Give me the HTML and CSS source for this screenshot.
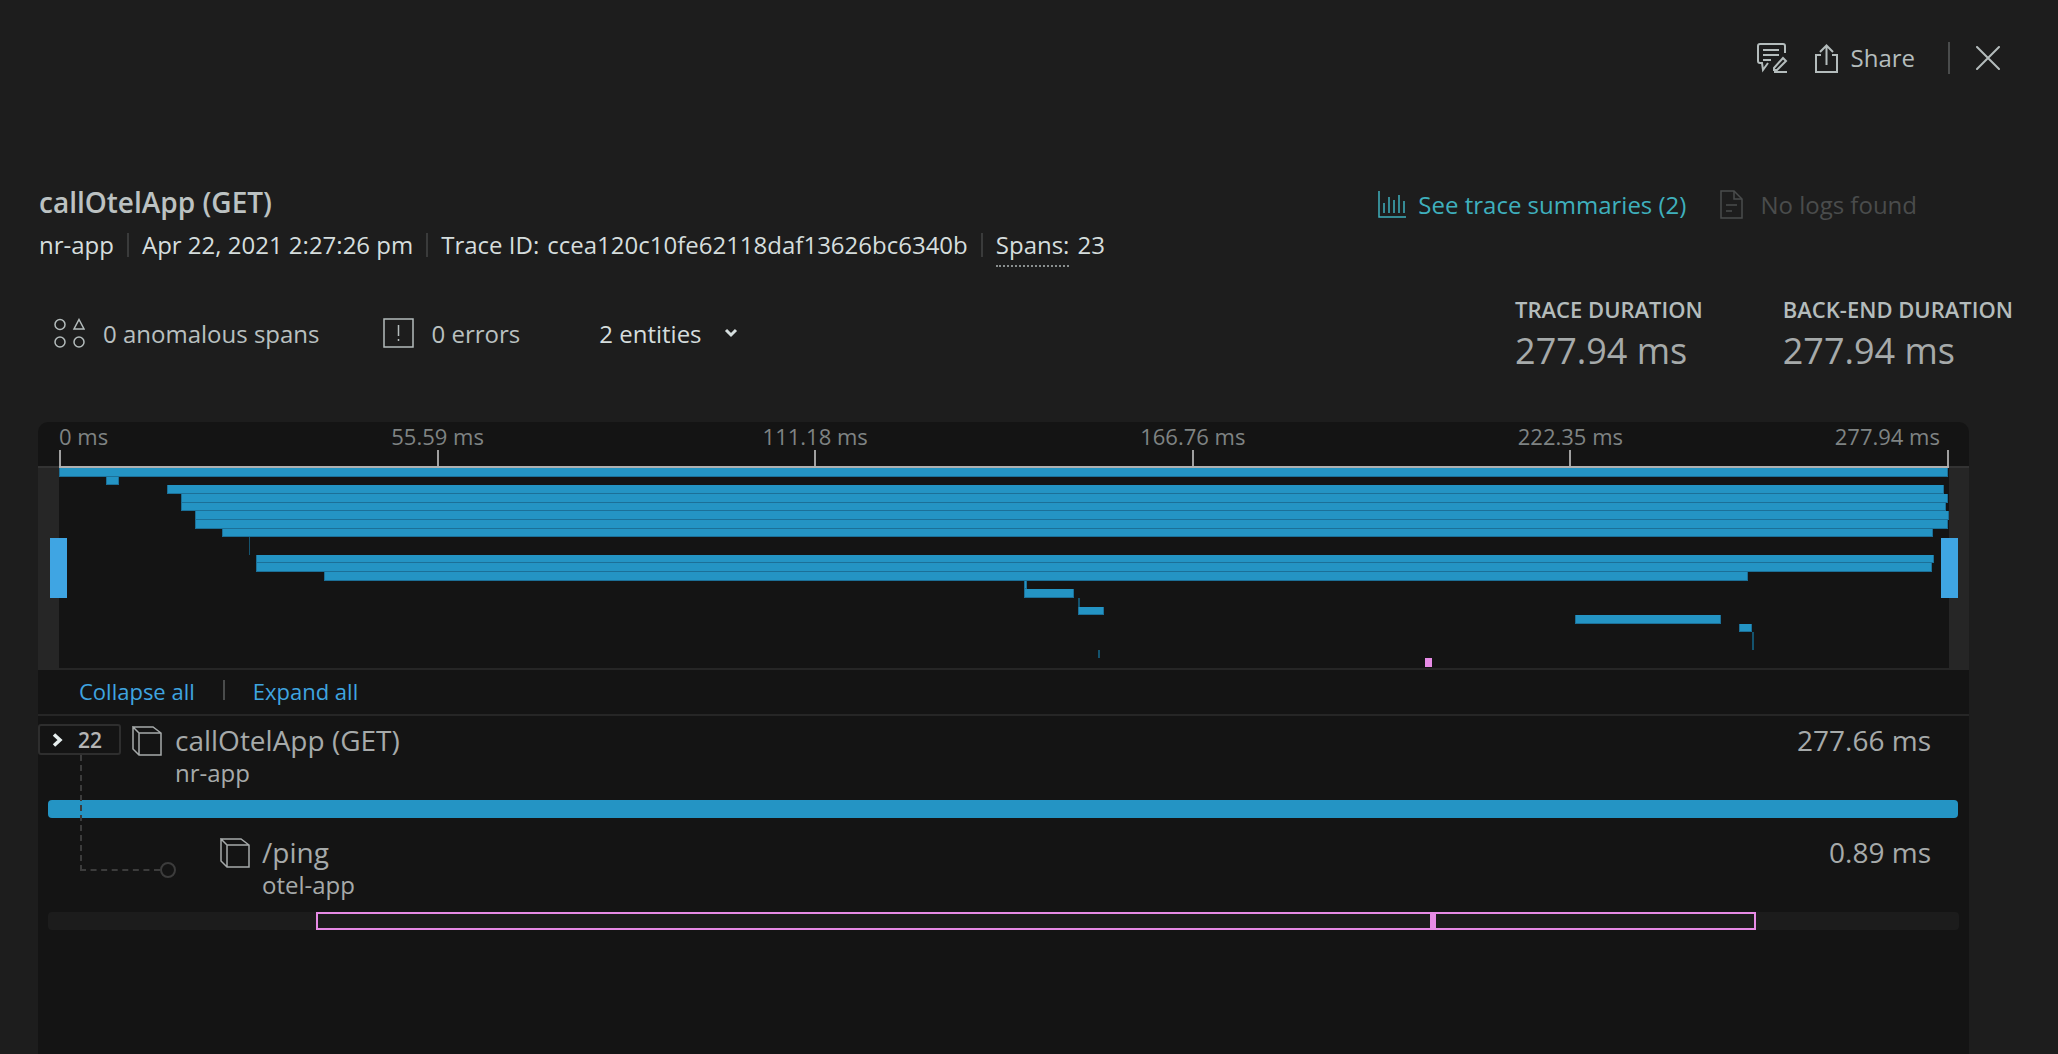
FILE: index.html
```html
<!DOCTYPE html>
<html lang="en">
<head>
    <meta charset="UTF-8">
    <title>callOtelApp (GET) - Trace</title>
    <link rel="stylesheet" href="styles.css">
</head>
<body>
    <header class="topbar">
        <svg class="icon-feedback" width="31" height="30" viewBox="0 0 31 30" fill="none" stroke="#b4bcbc" stroke-width="2">
            <path d="M11 20L6 27 5 20H3a2 2 0 0 1-2-2V3a2 2 0 0 1 2-2H26a2 2 0 0 1 2 2V10"/>
            <path d="M6 7H22M6 12H22M6 17H14"/>
            <path d="M17 25l9-10 3 3-9 9h-3z"/>
            <path d="M17 29H30"/>
        </svg>
        <svg class="icon-share" width="23" height="29" viewBox="0 0 23 29" fill="none" stroke="#b4bcbc" stroke-width="2">
            <path d="M6 11H1V28H22V11H17"/>
            <path d="M11.500 21V2M5 8l6.500-6.500L18 8"/>
        </svg>
        <span class="share-label">Share</span>
        <span class="topbar-sep"></span>
        <svg width="24" height="24" viewBox="0 0 24 24" fill="none" stroke="#b4bcbc" stroke-width="2" stroke-linecap="round">
            <path d="M1 1L23 23M23 1L1 23"/>
        </svg>
    </header>

    <section class="summary">
        <div class="summary-left">
            <h1 class="trace-title">callOtelApp (GET)</h1>
            <div class="trace-meta">
                <span>nr-app</span>
                <span class="meta-sep"></span>
                <span>Apr 22, 2021 2:27:26 pm</span>
                <span class="meta-sep"></span>
                <span>Trace ID:<span class="meta-value">ccea120c10fe62118daf13626bc6340b</span></span>
                <span class="meta-sep"></span>
                <span><span class="dotted">Spans:</span><span class="meta-value">23</span></span>
            </div>
            <div class="stats">
                <div class="stat stat-anomalous">
                    <svg width="31" height="30" viewBox="0 0 31 30" fill="none" stroke="#b4bcbc" stroke-width="1.500">
                        <circle cx="6" cy="6.500" r="5"/>
                        <path d="M25 1.500l5 9.500H20z"/>
                        <circle cx="6" cy="24" r="5"/>
                        <circle cx="25" cy="24" r="5"/>
                    </svg>
                    <span>0 anomalous spans</span>
                </div>
                <div class="stat stat-errors">
                    <svg width="31" height="30" viewBox="0 0 31 30" fill="none" stroke="#b4bcbc" stroke-width="1.500">
                        <rect x="1" y="1" width="29" height="28"/>
                        <path d="M15.500 7V18M15.500 21V23"/>
                    </svg>
                    <span>0 errors</span>
                </div>
                <div class="stat stat-entities">
                    <span>2 entities</span>
                    <svg width="14" height="10" viewBox="0 0 14 10" fill="none" stroke="#d5dddd" stroke-width="3">
                        <path d="M2 2l5 5 5-5"/>
                    </svg>
                </div>
            </div>
        </div>
        <div class="summary-right">
            <div class="links">
                <span class="link-trace">
                    <svg width="28" height="27" viewBox="0 0 28 27" fill="none" stroke="#3fb0bd" stroke-width="1.500">
                        <path d="M1 0V26H28"/>
                        <path d="M6 12V22M11 6V22M16 9V22M21 4V22M26 10V22"/>
                    </svg>
                    See trace summaries (2)
                </span>
                <span class="link-logs">
                    <svg width="23" height="29" viewBox="0 0 23 29" fill="none" stroke="#4a4c4c" stroke-width="1.500">
                        <path d="M1 1H14L22 9V28H1z"/>
                        <path d="M14 1V9H22M6 15H17M6 21H12"/>
                    </svg>
                    No logs found
                </span>
            </div>
            <div class="durations">
                <div class="duration">
                    <div class="duration-label">TRACE DURATION</div>
                    <div class="duration-value">277.94 ms</div>
                </div>
                <div class="duration">
                    <div class="duration-label">BACK-END DURATION</div>
                    <div class="duration-value">277.94 ms</div>
                </div>
            </div>
        </div>
    </section>

    <main class="panel">
        <div class="axis">
            <div class="tick tick-first"><span>0 ms</span><i></i></div>
            <div class="tick"><span>55.59 ms</span><i></i></div>
            <div class="tick"><span>111.18 ms</span><i></i></div>
            <div class="tick"><span>166.76 ms</span><i></i></div>
            <div class="tick"><span>222.35 ms</span><i></i></div>
            <div class="tick tick-last"><span>277.94 ms</span><i></i></div>
        </div>

        <div class="minimap">
            <div class="plot">
                <div class="handle handle-left"></div>
                <div class="handle handle-right"></div>
                <div class="mini-row"><div class="mini-bar" style="margin-left:0;width:1889px"></div></div>
                <div class="mini-row"><div class="mini-bar" style="margin-left:47px;width:13px"></div></div>
                <div class="mini-row"><div class="mini-bar" style="margin-left:108px;width:1777px"></div></div>
                <div class="mini-row"><div class="mini-bar" style="margin-left:122px;width:1767px"></div></div>
                <div class="mini-row"><div class="mini-bar" style="margin-left:122px;width:1765px"></div></div>
                <div class="mini-row"><div class="mini-bar" style="margin-left:136px;width:1754px"></div></div>
                <div class="mini-row"><div class="mini-bar" style="margin-left:136px;width:1753px"></div></div>
                <div class="mini-row"><div class="mini-bar" style="margin-left:163px;width:1711px"></div></div>
                <div class="mini-row"><div class="mini-thin" style="margin-left:190px;width:1px"></div></div>
                <div class="mini-row"><div class="mini-thin" style="margin-left:190px;width:1px"></div></div>
                <div class="mini-row"><div class="mini-bar" style="margin-left:197px;width:1678px"></div></div>
                <div class="mini-row"><div class="mini-bar" style="margin-left:197px;width:1676px"></div></div>
                <div class="mini-row"><div class="mini-bar" style="margin-left:265px;width:1424px"></div></div>
                <div class="mini-row"><div class="mini-bar" style="margin-left:965px;width:3px"></div></div>
                <div class="mini-row"><div class="mini-bar" style="margin-left:965px;width:50px"></div></div>
                <div class="mini-row"><div class="mini-thin" style="margin-left:1019px;width:2px"></div></div>
                <div class="mini-row"><div class="mini-bar" style="margin-left:1019px;width:26px"></div></div>
                <div class="mini-row"><div class="mini-bar" style="margin-left:1516px;width:146px"></div></div>
                <div class="mini-row"><div class="mini-bar" style="margin-left:1680px;width:13px"></div></div>
                <div class="mini-row"><div class="mini-thin" style="margin-left:1693px;width:2px"></div></div>
                <div class="mini-row"><div class="mini-thin" style="margin-left:1693px;width:2px"></div></div>
                <div class="mini-row"><div class="mini-thin" style="margin-left:1039px;width:2px"></div></div>
                <div class="mini-row"><div class="mini-pink" style="margin-left:1366px;width:7px"></div></div>
            </div>
        </div>

        <div class="tree-actions">
            <a class="action">Collapse all</a>
            <span class="action-sep"></span>
            <a class="action">Expand all</a>
        </div>

        <div class="spans">
            <div class="connector"></div>
            <div class="connector-dot"></div>

            <div class="span-head">
                <div class="count-badge">
                    <svg width="11" height="14" viewBox="0 0 11 14" fill="none" stroke="#e6eeee" stroke-width="3.500">
                        <path d="M2 1.500L8 7 2 12.500"/>
                    </svg>
                    <span>22</span>
                </div>
                <svg class="cube" width="30" height="30" viewBox="0 0 30 30" fill="none" stroke="#a6aaaa" stroke-width="1.500">
                    <path d="M1 1H21L29 7V29H7L1 23V1L7 7H29M7 7V29"/>
                </svg>
                <div class="span-name">
                    <div class="span-title">callOtelApp (GET)</div>
                    <div class="span-entity">nr-app</div>
                </div>
                <div class="span-time">277.66 ms</div>
            </div>
            <div class="span-bar"></div>

            <div class="span-head span-child">
                <svg class="cube" width="30" height="30" viewBox="0 0 30 30" fill="none" stroke="#a6aaaa" stroke-width="1.500">
                    <path d="M1 1H21L29 7V29H7L1 23V1L7 7H29M7 7V29"/>
                </svg>
                <div class="span-name">
                    <div class="span-title">/ping</div>
                    <div class="span-entity">otel-app</div>
                </div>
                <div class="span-time">0.89 ms</div>
            </div>
            <div class="span-track">
                <div class="span-range" style="margin-left:268px;width:1440px">
                    <div class="span-mark" style="left:1112px"></div>
                </div>
            </div>
        </div>
    </main>
</body>
</html>
```

FILE: styles.css
```css
* {
    box-sizing: border-box;
}
html, body {
    height: 100%;
}
body {
    margin: 0;
    display: flex;
    flex-direction: column;
    overflow: hidden;
    background-color: #1d1d1d;
    color: #d5dddd;
    font-family: "Open Sans", sans-serif;
    font-size: 24px;
}

/* top bar */
.topbar {
    display: flex;
    align-items: center;
    justify-content: flex-end;
    height: 32px;
    margin-top: 42px;
    padding-right: 58px;
    color: #b4bcbc;
}
.icon-feedback {
    margin-right: 27px;
}
.icon-share {
    margin-right: 13px;
}
.share-label {
    margin-bottom: 2px;
}
.topbar-sep {
    width: 2px;
    height: 32px;
    margin: 0 26px 0 33px;
    background-color: #4a4c4c;
}

/* summary */
.summary {
    display: flex;
    justify-content: space-between;
    margin-top: 113px;
    padding: 0 45px 0 39px;
}
.trace-title {
    margin: 0;
    color: #bcc2c2;
    font-size: 28px;
    font-weight: 600;
    line-height: 30px;
}
.trace-meta {
    display: flex;
    align-items: center;
    height: 30px;
    margin-top: 13px;
    line-height: 30px;
}
.meta-sep {
    width: 2px;
    height: 24px;
    margin: 0 13px;
    background-color: #3a3b3b;
}
.meta-value {
    margin-left: 8px;
}
.dotted {
    padding-bottom: 4px;
    border-bottom: 2px dotted #8a8f8f;
}
.stats {
    display: flex;
    align-items: center;
    height: 30px;
    margin-top: 58px;
    color: #b9c0c0;
}
.stat {
    display: flex;
    align-items: center;
}
.stat-anomalous {
    gap: 18px;
    margin-left: 15px;
}
.stat-errors {
    gap: 18px;
    margin-left: 63px;
}
.stat-entities {
    gap: 22px;
    margin-left: 79px;
    color: #d5dddd;
}

.summary-right {
    display: flex;
    flex-direction: column;
    align-items: flex-end;
}
.links {
    display: flex;
    height: 30px;
    margin-top: 2px;
    margin-right: 96px;
}
.link-trace, .link-logs {
    display: flex;
    align-items: center;
    gap: 12px;
}
.link-trace {
    color: #3fb0bd;
    margin-right: 34px;
}
.link-logs {
    gap: 17px;
    color: #4a4c4c;
}
.durations {
    display: flex;
    gap: 80px;
    margin-top: 75px;
}
.duration-label {
    color: #b4bcbc;
    font-size: 22px;
    font-weight: 600;
    line-height: 30px;
}
.duration-value {
    margin-top: 3px;
    color: #a6aaaa;
    font-size: 36px;
    line-height: 48px;
}

/* trace panel */
.panel {
    flex: 1;
    width: 1931px;
    margin-top: 47px;
    margin-left: 38px;
    background-color: #141414;
    border-radius: 10px 10px 0 0;
}
.axis {
    display: flex;
    justify-content: space-between;
    height: 44px;
    margin-left: 21px;
    margin-right: 20px;
    color: #7f8383;
    font-size: 22px;
    line-height: 28px;
}
.tick {
    display: flex;
    flex-direction: column;
    align-items: center;
    width: 2px;
    white-space: nowrap;
}
.tick span {
    height: 28px;
}
.tick i {
    width: 2px;
    height: 16px;
    background-color: #a0a0a0;
}
.tick-first {
    align-items: flex-start;
}
.tick-last {
    align-items: flex-end;
}
.tick-last span {
    padding-right: 9px;
}

.minimap {
    padding: 0 20px 0 21px;
    background-color: #262626;
    background-image: linear-gradient(#333, #333);
    background-size: 100% 2px;
    background-repeat: no-repeat;
    border-bottom: 2px solid #262626;
}
.plot {
    position: relative;
    display: grid;
    grid-auto-rows: 8.667px;
    height: 202px;
    padding-top: 2px;
    background-color: #141414;
    background-image: linear-gradient(#b0b0b0, #b0b0b0);
    background-size: 100% 2px;
    background-repeat: no-repeat;
}
.mini-row {
    display: flex;
}
.mini-bar {
    background-color: #2494c4;
    border: 1px solid #1c7098;
    border-top: 0;
}
.mini-thin {
    background-color: #14536e;
}
.mini-pink {
    background-color: #e78be6;
}
.handle {
    position: absolute;
    top: 72px;
    width: 17px;
    height: 60px;
    background-color: #3fa5e3;
}
.handle-left {
    left: -9px;
}
.handle-right {
    right: -9px;
}

.tree-actions {
    display: flex;
    align-items: center;
    height: 46px;
    padding-left: 41px;
    padding-bottom: 2px;
    font-size: 22px;
    border-bottom: 2px solid #262626;
}
.action {
    color: #3fa5e0;
}
.action-sep {
    width: 2px;
    height: 20px;
    margin: 0 28px 2px;
    background-color: #4a4c4c;
}

/* span rows */
.spans {
    position: relative;
    padding: 8px 10px 0;
}
.span-head {
    display: flex;
    align-items: flex-start;
    height: 76px;
}
.count-badge {
    display: flex;
    align-items: center;
    gap: 15px;
    width: 83px;
    height: 31px;
    margin-left: -10px;
    padding-left: 12px;
    color: #b4b4b4;
    font-size: 21px;
    font-weight: 600;
    background-color: #141414;
    border: 2px solid #2e2e2e;
    border-radius: 3px;
}
.cube {
    flex: none;
    margin-top: 2px;
}
.span-head .cube {
    margin-left: 11px;
}
.span-name {
    margin-left: 13px;
}
.span-child .span-name {
    margin-left: 12px;
}
.span-title {
    color: #a6aaaa;
    font-size: 28px;
    line-height: 32px;
}
.span-entity {
    margin-top: 2px;
    color: #a6aaaa;
    line-height: 30px;
}
.span-time {
    margin-left: auto;
    margin-right: 28px;
    color: #a6aaaa;
    font-size: 28px;
    line-height: 32px;
}
.span-bar {
    height: 18px;
    margin-right: 1px;
    background-color: #2494c4;
    border-radius: 4px;
}
.span-child {
    margin-top: 18px;
    padding-left: 161px;
}
.span-track {
    display: flex;
    height: 18px;
    background-color: #1c1c1c;
    border-radius: 4px;
}
.span-range {
    position: relative;
    height: 18px;
    border: 2px solid #e78be6;
}
.span-mark {
    position: absolute;
    top: -2px;
    width: 6px;
    height: 18px;
    background-color: #e78be6;
}
.connector {
    position: absolute;
    left: 42px;
    top: 39px;
    width: 80px;
    height: 116px;
    border-left: 2px dashed #3c3c3c;
    border-bottom: 2px dashed #3c3c3c;
}
.connector-dot {
    position: absolute;
    left: 122px;
    top: 146px;
    width: 16px;
    height: 16px;
    border: 2px solid #3c3c3c;
    border-radius: 50%;
}
```
